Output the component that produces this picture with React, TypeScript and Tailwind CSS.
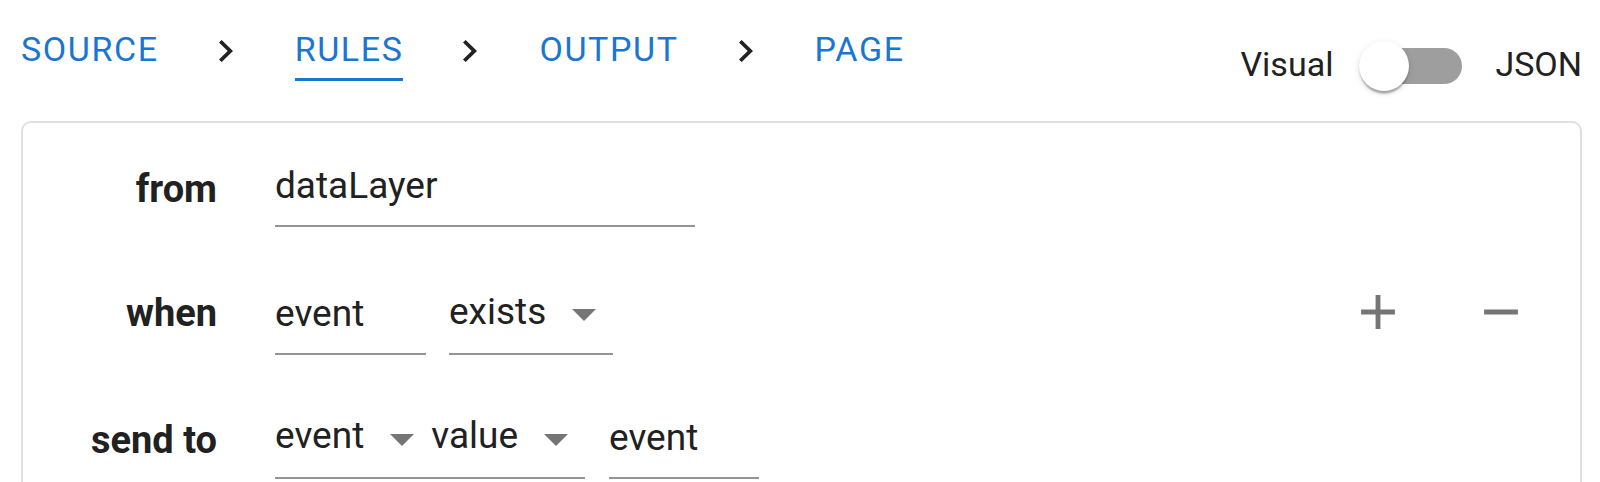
import React from "react";

const Chevron = () => (
  <svg
    width="14"
    height="22"
    viewBox="8.59 6 7.41 12"
    preserveAspectRatio="none"
    className="-ml-[2px] mt-[11px] shrink-0"
    fill="#222222"
  >
    <path d="M10 6 8.59 7.41 13.17 12l-4.58 4.59L10 18l6-6z" />
  </svg>
);

const Caret = ({ cls }: { cls: string }) => (
  <svg width="24" height="12" viewBox="7 10 10 5" className={cls} fill="#757575">
    <path d="M7 10l5 5 5-5z" />
  </svg>
);

const TextField = ({ value, width, cls = "" }: { value: string; width: string; cls?: string }) => (
  <div
    className={`${width} ${cls} border-b-2 border-[#949494] pb-[19px] text-[37px] leading-[40px] text-[#212121] whitespace-nowrap`}
  >
    {value}
  </div>
);

const Select = ({ value, cls = "", caretCls }: { value: string; cls?: string; caretCls: string }) => (
  <div className={`${cls} flex items-center border-b-2 border-[#949494] pb-[21px]`}>
    <span className="text-[37px] leading-[40px] text-[#212121] whitespace-nowrap">{value}</span>
    <Caret cls={caretCls} />
  </div>
);

const Tab = ({ label }: { label: string }) => (
  <span className="text-[34px] leading-[40px] tracking-[1.6px] text-[#1976d2]">{label}</span>
);

export default function App() {
  return (
    <div className="h-[482px] overflow-hidden bg-white pl-[21px] pr-[18px] font-['Roboto',sans-serif]">
      {/* top bar */}
      <div className="flex items-start justify-between">
        <div className="flex items-start gap-[62px] pt-[29px]">
          <Tab label="SOURCE" />
          <Chevron />
          <div className="flex flex-col">
            <Tab label="RULES" />
            <div className="mt-[9px] h-[3px] bg-[#1976d2]" />
          </div>
          <Chevron />
          <Tab label="OUTPUT" />
          <Chevron />
          <Tab label="PAGE" />
        </div>
        <div className="flex items-center pt-[41px]">
          <span className="mb-[4px] text-[34px] leading-[40px] text-[#212121]">Visual</span>
          <div className="relative ml-[26px] flex h-[50px] w-[103px] items-center">
            <div className="ml-[15px] h-[36px] w-[88px] rounded-full bg-[#9e9e9e]" />
            <div className="absolute left-0 top-0 h-[50px] w-[50px] rounded-full bg-white shadow-[0_5px_2px_-2px_rgba(0,0,0,0.2),0_2px_2px_0_rgba(0,0,0,0.14),0_2px_7px_0_rgba(0,0,0,0.12)]" />
          </div>
          <span className="mb-[4px] ml-[33px] text-[34px] leading-[40px] text-[#212121]">JSON</span>
        </div>
      </div>

      {/* card */}
      <div className="mt-[30px] rounded-[10px] border-2 border-[#e0e0e0] pb-[60px] pr-[50px] pt-[43px]">
        {/* row 1 */}
        <div className="flex items-end">
          <div className="mb-[18px] w-[194px] text-right text-[38px] font-bold leading-[40px] text-[#212121]">
            from
          </div>
          <div className="ml-[58px] flex items-end">
            <TextField value="dataLayer" width="w-[420px]" />
          </div>
        </div>

        {/* row 2 */}
        <div className="mt-[56px] flex items-end">
          <div className="mb-[22px] w-[194px] text-right text-[38px] font-bold leading-[40px] text-[#212121]">
            when
          </div>
          <div className="ml-[58px] flex items-end">
            <TextField value="event" width="w-[151px]" />
            <Select value="exists" cls="ml-[23px]" caretCls="ml-[26px] mr-[17px] mt-[6px] shrink-0" />
          </div>
          <div className="mb-[14px] ml-auto flex items-center gap-[65px]">
            <svg width="58" height="58" viewBox="0 0 24 24" fill="#757575">
              <path d="M19 13h-6v6h-2v-6H5v-2h6V5h2v6h6v2z" />
            </svg>
            <svg width="58" height="58" viewBox="0 0 24 24" fill="#757575">
              <path d="M19 13H5v-2h14v2z" />
            </svg>
          </div>
        </div>

        {/* row 3 */}
        <div className="mt-[61px] flex items-end">
          <div className="mb-[19px] w-[194px] text-right text-[38px] font-bold leading-[40px] text-[#212121]">
            send to
          </div>
          <div className="ml-[58px] flex items-end">
            <Select value="event" caretCls="ml-[26px] mr-[17px] mt-[8px] shrink-0" />
            <Select value="value" caretCls="ml-[26px] mr-[17px] mt-[8px] shrink-0" />
            <TextField value="event" width="w-[150px]" cls="ml-[24px]" />
          </div>
        </div>
      </div>
    </div>
  );
}
